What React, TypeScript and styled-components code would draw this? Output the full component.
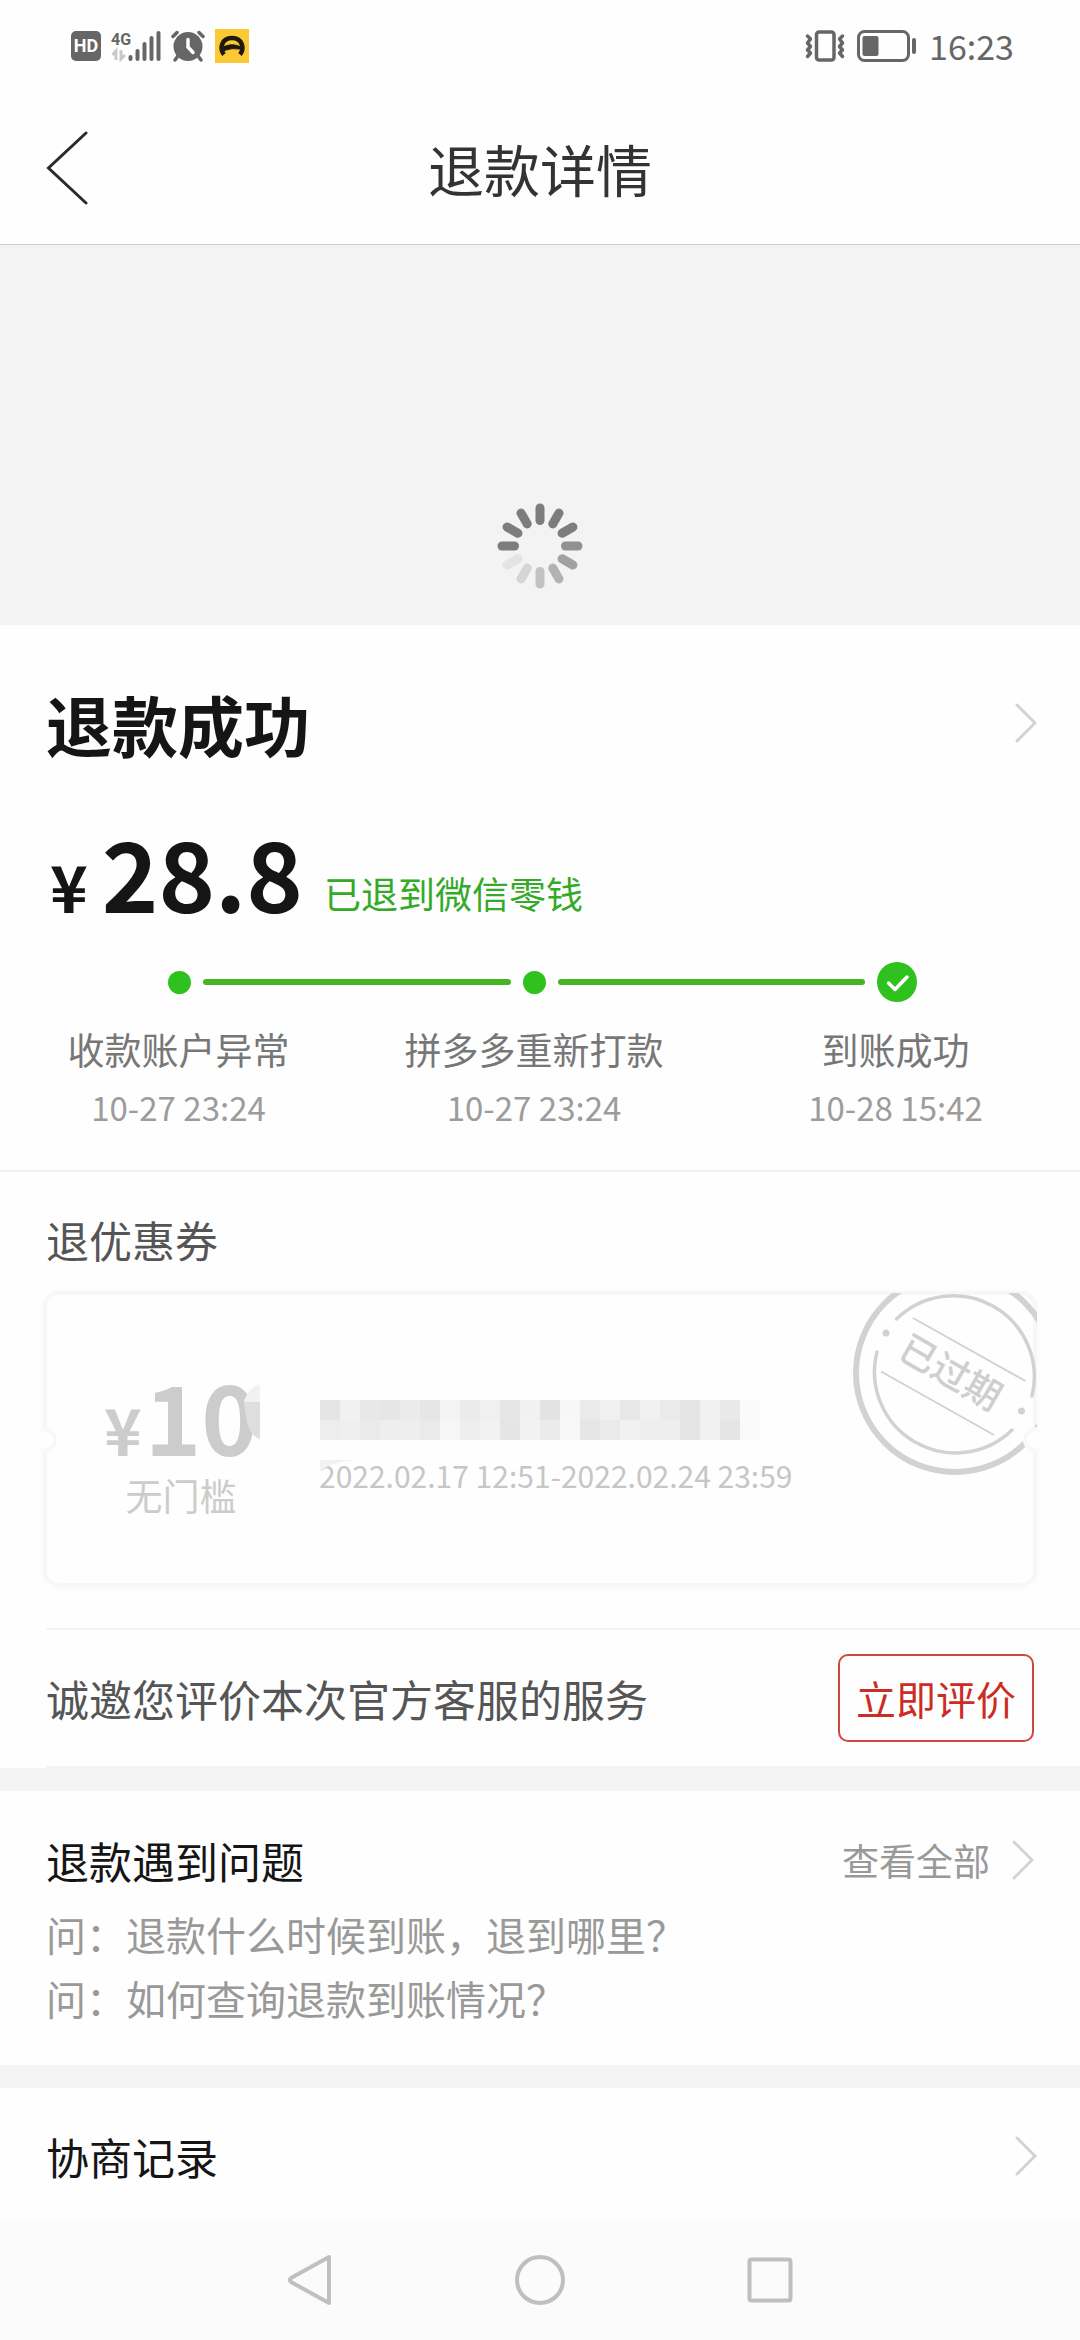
import React from "react";
import styled, { createGlobalStyle } from "styled-components";

const GlobalStyle = createGlobalStyle`
  *, *::before, *::after { box-sizing: border-box; }
  body {
    margin: 0;
    background: #fefefe;
    font-family: "Noto Sans CJK SC", "Noto Sans", sans-serif;
    color: #151515;
  }
  h1, h2, p, ul, ol { margin: 0; padding: 0; font-weight: 400; }
  ul, ol { list-style: none; }
  button { border: 0; padding: 0; background: none; font-family: inherit; cursor: pointer; }
  a { color: inherit; text-decoration: none; }
  svg { display: block; flex: none; }
`;

const Page = styled.div`
  display: flex;
  flex-direction: column;
  min-height: 100vh;
`;

/* ---------- system status bar ---------- */

const StatusBar = styled.div`
  display: flex;
  align-items: center;
  justify-content: space-between;
  height: 92px;
  padding: 0 66px 0 71px;
  color: #666;
`;

const StatusGroup = styled.div<{ $gap: number }>`
  display: flex;
  align-items: center;
  gap: ${(p) => p.$gap}px;
`;

const HdBadge = styled.span`
  width: 30px;
  height: 30px;
  border-radius: 5px;
  background: #666;
  color: #fff;
  font: 700 18px/30px Roboto, sans-serif;
  text-align: center;
`;

const Clock = styled.time`
  font-size: 34px;
  line-height: 40px;
`;

/* ---------- header ---------- */

const Header = styled.header`
  display: grid;
  grid-template-columns: 1fr auto 1fr;
  align-items: center;
  height: 153px;
  padding: 0 45px;
  border-bottom: 1px solid #cfcfcf;
`;

const BackButton = styled.button`
  justify-self: start;
`;

const HeaderTitle = styled.h1`
  font-size: 56px;
  line-height: 80px;
  color: #333;
`;

const LoadingBanner = styled.div`
  display: flex;
  justify-content: center;
  align-items: flex-end;
  height: 380px;
  padding-bottom: 35px;
  background: #f3f3f3;
`;

/* ---------- refund status ---------- */

const StatusSection = styled.section`
  padding: 50px 0 41px;
  border-bottom: 2px solid #f1f1f1;
`;

const StatusLink = styled.a`
  display: flex;
  align-items: center;
  justify-content: space-between;
  padding: 0 43px 0 46px;
`;

const StatusTitle = styled.h2`
  font-size: 66px;
  line-height: 96px;
  font-weight: 700;
`;

const AmountRow = styled.p`
  display: flex;
  align-items: flex-end;
  margin-top: 45px;
  padding: 0 46px 0 50px;
`;

const Price = styled.span<{ $gap: number; $muted?: boolean }>`
  display: flex;
  align-items: baseline;
  gap: ${(p) => p.$gap}px;
  font-size: 96px;
  line-height: 112px;
  font-weight: 700;
  color: ${(p) => (p.$muted ? "#ccc" : "#151515")};
`;

const Currency = styled.span`
  font-size: 64px;
  line-height: 80px;
`;

const Destination = styled.span`
  margin: 0 0 7px 21px;
  font-size: 37px;
  line-height: 56px;
  color: #35a928;
`;

const Track = styled.div`
  display: flex;
  align-items: center;
  gap: 12px;
  margin-top: 34px;
  padding: 0 163px 0 168px;
`;

const Dot = styled.span`
  width: 23px;
  height: 23px;
  border-radius: 50%;
  background: #2fc11d;
`;

const Line = styled.span`
  flex: 1;
  height: 6px;
  border-radius: 3px;
  background: #45b527;
`;

const StepList = styled.ol`
  display: grid;
  grid-template-columns: 357fr 354fr 369fr;
  margin-top: 19px;
  text-align: center;
`;

const StepName = styled.p`
  font-size: 37px;
  line-height: 56px;
  color: #777;
`;

const StepTime = styled.time`
  display: block;
  margin-top: 8px;
  font-size: 33px;
  line-height: 44px;
  color: #9c9c9c;
`;

/* ---------- coupon ---------- */

const CouponSection = styled.section`
  padding: 35px 43px 41px;
`;

const SectionTitle = styled.h2<{ $color?: string }>`
  font-size: 43px;
  line-height: 64px;
  color: ${(p) => p.$color ?? "#151515"};
`;

const CouponHeading = styled(SectionTitle)`
  padding-left: 3px;
`;

const CouponCard = styled.article`
  position: relative;
  display: flex;
  align-items: center;
  height: 296px;
  margin-top: 20px;
  border-radius: 16px;
  overflow: hidden;
  background: #fefefe;
  box-shadow: inset 0 0 0 4px #f7f7f7, 0 2px 8px rgba(0, 0, 0, 0.02);
`;

const Notch = styled.span<{ $side: "left" | "right" }>`
  position: absolute;
  top: 50%;
  ${(p) => p.$side}: -12px;
  width: 26px;
  height: 26px;
  margin-top: -12px;
  border: 4px solid #f8f8f8;
  border-radius: 50%;
  background: #fefefe;
`;

const CouponValue = styled.div`
  position: relative;
  display: flex;
  flex-direction: column;
  align-items: center;
  width: 276px;
`;

const CouponRule = styled.p`
  font-size: 37px;
  line-height: 48px;
  color: #ccc;
`;

const Smudge = styled.svg`
  position: absolute;
  top: 25px;
  left: 201px;
`;

const CouponInfo = styled.div`
  position: relative;
  margin-top: 16px;
`;

const Mosaic = styled.div`
  display: grid;
  grid-template-columns: repeat(22, 20px);
  grid-auto-rows: 20px;
  margin-left: 1px;
`;

const Pixel = styled.i<{ $shade: string }>`
  background: ${(p) => "#" + p.$shade.repeat(3)};
`;

const CouponDate = styled.p`
  margin-top: 15px;
  font-size: 30px;
  line-height: 40px;
  color: #c6c6c6;
`;

const Wedge = styled.svg`
  position: absolute;
  top: 60px;
  left: 1px;
`;

const Stamp = styled.svg`
  position: absolute;
  top: 2px;
  right: 0;
`;

/* ---------- review, questions, records ---------- */

const ReviewRow = styled.section`
  display: flex;
  align-items: center;
  justify-content: space-between;
  height: 140px;
  margin-left: 46px;
  padding-right: 46px;
  border-top: 2px solid #f4f4f4;
  border-bottom: 2px solid #f4f4f4;
`;

const ReviewButton = styled.button`
  padding: 0 16px;
  border: 2px solid #cf4742;
  border-radius: 10px;
  font-size: 40px;
  line-height: 84px;
  color: #cb2d26;
`;

const Block = styled.section`
  padding: 37px 46px 35px;
  border-top: 23px solid #f3f3f3;
`;

const BlockHead = styled.div`
  display: flex;
  align-items: center;
  justify-content: space-between;
`;

const MoreLink = styled.a`
  display: flex;
  align-items: center;
  gap: 22px;
  font-size: 37px;
  line-height: 56px;
  color: #999;
`;

const QuestionList = styled.ul`
  margin-top: 10px;
  font-size: 40px;
  line-height: 64px;
  color: #999;
`;

const RecordLink = styled.a`
  display: flex;
  align-items: center;
  justify-content: space-between;
  padding: 36px 43px 30px 46px;
  border-top: 23px solid #f3f3f3;
`;

const NavBar = styled.nav`
  display: flex;
  align-items: center;
  justify-content: center;
  gap: 180px;
  height: 121px;
  margin-top: auto;
  background: #fbfbfb;
`;

const NavButton = styled.button`
  display: flex;
  justify-content: center;
  width: 50px;
`;

/* ---------- drawings ---------- */

const SignalIcon = () => (
  <svg width="50" height="34" viewBox="0 0 50 34" fill="#666">
    <text x="0" y="16" fontFamily="Roboto, sans-serif" fontWeight="700" fontSize="16">4G</text>
    <path d="M5 31V22L1.5 26M10 21v9l4-4" fill="none" stroke="#c9c9c9" strokeWidth="3" />
    <rect x="17.500" y="26" width="4" height="6" rx="2" />
    <rect x="24.500" y="20" width="4" height="12" rx="2" />
    <rect x="31.500" y="13" width="4" height="19" rx="2" />
    <rect x="38.500" y="7" width="4" height="25" rx="2" />
    <rect x="45.500" y="2" width="4" height="30" rx="2" />
  </svg>
);

const AlarmIcon = () => (
  <svg width="34" height="34" viewBox="0 0 34 34" fill="none" strokeLinecap="round">
    <circle cx="17" cy="17.500" r="14.500" fill="#666" />
    <path d="M2 7.500 6 3.500M28 3.500 32 7.500" stroke="#666" strokeWidth="3.500" />
    <path d="M7 27 4 31M27 27 30 31" stroke="#666" strokeWidth="3.500" />
    <path d="M17 10.500V18L22 23.500" stroke="#fff" strokeWidth="3.500" />
  </svg>
);

const TaxiIcon = () => (
  <svg width="34" height="34" viewBox="0 0 34 34">
    <rect width="34" height="34" fill="#fbc935" />
    <path d="M9 25.500C4.500 20 6 9 17 9s12.500 11 8 16.500" fill="none" stroke="#1d1a0c" strokeWidth="4.500" />
    <path d="M9 20v-2.500q8-3.500 16 0V20q-8-1.500-16 1.500z" fill="#1d1a0c" stroke="#1d1a0c" />
  </svg>
);

const VibrateIcon = () => (
  <svg width="40" height="34" viewBox="0 0 40 34" fill="none" stroke="#666" strokeWidth="3.500" strokeLinejoin="round" strokeLinecap="round">
    <rect x="11.500" y="3" width="17.500" height="28" rx="2.500" />
    <path d="M2.500 7l3 3-3 4 3 3.500-3 3.500 3 3-3 3.500" />
    <path d="M37.500 7l-3 3 3 4-3 3.500 3 3.500-3 3 3 3.500" />
  </svg>
);

const BatteryIcon = () => (
  <svg width="60" height="34" viewBox="0 0 60 34">
    <rect x="1.500" y="2.500" width="50" height="29" rx="6" fill="none" stroke="#666" strokeWidth="3" />
    <rect x="5.500" y="7" width="16" height="20" rx="2" fill="#666" />
    <rect x="55" y="9" width="4" height="16" rx="2" fill="#666" />
  </svg>
);

const BackIcon = () => (
  <svg width="44" height="74" viewBox="0 0 44 74" fill="none" stroke="#2b2b2b" strokeWidth="3" strokeLinecap="round">
    <path d="M41 2 3.500 37 41 72" />
  </svg>
);

const Chevron = () => (
  <svg width="22" height="40" viewBox="0 0 22 40" fill="none" stroke="#d2d2d2" strokeWidth="3" strokeLinecap="round">
    <path d="M2 2 20 20 2 38" />
  </svg>
);

const SPOKES = ["#7d7d7d", "#7d7d7d", "#7d7d7d", "#919191", "#a1a1a1", "#b2b2b2", "#c2c2c2", "#d5d5d5", "#e4e4e4", "#7d7d7d", "#7d7d7d", "#7d7d7d"];

const Spinner = () => (
  <svg width="88" height="88" viewBox="-44 -44 88 88" strokeWidth="9" strokeLinecap="round">
    {SPOKES.map((color, i) => (
      <path key={i} d="M0-25.500V-38" stroke={color} transform={`rotate(${i * 30})`} />
    ))}
  </svg>
);

const DoneIcon = () => (
  <svg width="40" height="40" viewBox="0 0 40 40">
    <circle cx="20" cy="20" r="20" fill="#2fc11d" />
    <path d="M11.500 21l6.500 6.500 12-12.500" fill="none" stroke="#fff" strokeWidth="3.500" strokeLinecap="round" strokeLinejoin="round" />
  </svg>
);

const ExpiredStamp = () => (
  <Stamp width="186" height="184" viewBox="851 1293 186 184" fill="none" stroke="#d2d2d2">
    <circle cx="955" cy="1373" r="99" strokeWidth="6" />
    <path d="M896.500 1319A81 81 0 0 1 1032 1396" strokeWidth="3.500" strokeLinecap="round" />
    <path d="M877 1352A81 81 0 0 0 1012 1430" strokeWidth="3.500" strokeLinecap="round" />
    <path d="M913 1318 1025.500 1381M881 1371.500 994 1435" strokeWidth="2" />
    <circle cx="886" cy="1333" r="3.500" fill="#d2d2d2" stroke="none" />
    <circle cx="1021.500" cy="1411" r="3.500" fill="#d2d2d2" stroke="none" />
    <text
      transform="translate(951 1372) rotate(30)"
      textAnchor="middle"
      y="14"
      fontSize="37"
      fontWeight="500"
      fill="#cfcfcf"
      stroke="none"
    >
      已过期
    </text>
  </Stamp>
);

const PIXELS = (
  "e5 f1 e8 e6 eb e6 f3 eb f0 e6 f1 e3 f7 ea f0 e7 f1 ea e5 f1 e9 fa " +
  "ed ef ea ee ee ea f6 ee f2 e5 f2 eb f8 e6 ea f1 ee ee e5 f1 e5 fa"
).split(" ");

const STEPS = [
  { name: "收款账户异常", time: "10-27 23:24" },
  { name: "拼多多重新打款", time: "10-27 23:24" },
  { name: "到账成功", time: "10-28 15:42" },
];

const QUESTIONS = ["问：退款什么时候到账，退到哪里？", "问：如何查询退款到账情况？"];

export default function App() {
  return (
    <Page>
      <GlobalStyle />
      <StatusBar>
        <StatusGroup $gap={10}>
          <HdBadge>HD</HdBadge>
          <SignalIcon />
          <AlarmIcon />
          <TaxiIcon />
        </StatusGroup>
        <StatusGroup $gap={12}>
          <VibrateIcon />
          <BatteryIcon />
          <Clock>16:23</Clock>
        </StatusGroup>
      </StatusBar>

      <Header>
        <BackButton aria-label="返回">
          <BackIcon />
        </BackButton>
        <HeaderTitle>退款详情</HeaderTitle>
      </Header>

      <main>
        <LoadingBanner>
          <Spinner />
        </LoadingBanner>

        <StatusSection>
          <StatusLink href="#status">
            <StatusTitle>退款成功</StatusTitle>
            <Chevron />
          </StatusLink>
          <AmountRow>
            <Price $gap={14}>
              <Currency>¥</Currency>28.8
            </Price>
            <Destination>已退到微信零钱</Destination>
          </AmountRow>
          <Track>
            <Dot />
            <Line />
            <Dot />
            <Line />
            <DoneIcon />
          </Track>
          <StepList>
            {STEPS.map((step) => (
              <li key={step.name}>
                <StepName>{step.name}</StepName>
                <StepTime>{step.time}</StepTime>
              </li>
            ))}
          </StepList>
        </StatusSection>

        <CouponSection>
          <CouponHeading $color="#555">退优惠券</CouponHeading>
          <CouponCard>
            <CouponValue>
              <Price $gap={3} $muted>
                <Currency>¥</Currency>10
              </Price>
              <CouponRule>无门槛</CouponRule>
              <Smudge width="16" height="56" viewBox="0 0 16 56">
                <path d="M16 0Q3 5 0 18H16z" fill="#f1f1f1" />
                <path d="M0 18H16V55Q6 52 3 38Q1 28 0 18z" fill="#dedede" />
              </Smudge>
            </CouponValue>
            <CouponInfo>
              <Mosaic>
                {PIXELS.map((shade, i) => (
                  <Pixel key={i} $shade={shade} />
                ))}
              </Mosaic>
              <CouponDate>2022.02.17 12:51-2022.02.24 23:59</CouponDate>
              <Wedge width="40" height="12" viewBox="0 0 40 12">
                <path d="M0 0H38Q18 2 10 5L0 11z" fill="#f2f2f2" />
              </Wedge>
            </CouponInfo>
            <ExpiredStamp />
            <Notch $side="left" />
            <Notch $side="right" />
          </CouponCard>
        </CouponSection>

        <ReviewRow>
          <SectionTitle $color="#555">诚邀您评价本次官方客服的服务</SectionTitle>
          <ReviewButton>立即评价</ReviewButton>
        </ReviewRow>

        <Block>
          <BlockHead>
            <SectionTitle>退款遇到问题</SectionTitle>
            <MoreLink href="#questions">
              查看全部
              <Chevron />
            </MoreLink>
          </BlockHead>
          <QuestionList>
            {QUESTIONS.map((question) => (
              <li key={question}>{question}</li>
            ))}
          </QuestionList>
        </Block>

        <RecordLink href="#records">
          <SectionTitle>协商记录</SectionTitle>
          <Chevron />
        </RecordLink>
      </main>

      <NavBar>
        <NavButton aria-label="返回上一页">
          <svg width="48" height="52" viewBox="0 0 48 52" fill="none" stroke="#bfbfbf" strokeWidth="4" strokeLinejoin="round">
            <path d="M43 3V49L5 28Q2.500 26 5 24z" />
          </svg>
        </NavButton>
        <NavButton aria-label="主屏幕">
          <svg width="50" height="50" viewBox="0 0 50 50" fill="none" stroke="#bfbfbf" strokeWidth="4">
            <circle cx="25" cy="25" r="23" />
          </svg>
        </NavButton>
        <NavButton aria-label="最近任务">
          <svg width="46" height="46" viewBox="0 0 46 46" fill="none" stroke="#bfbfbf" strokeWidth="4">
            <rect x="2.500" y="2.500" width="41" height="41" rx="2" />
          </svg>
        </NavButton>
      </NavBar>
    </Page>
  );
}
